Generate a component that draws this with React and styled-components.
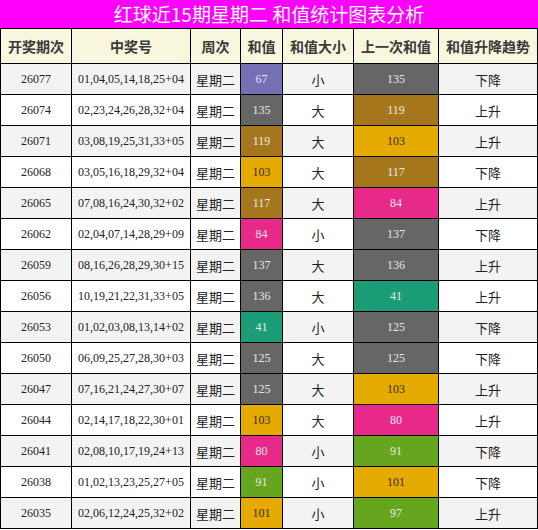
import React from "react";
import styled, { createGlobalStyle } from "styled-components";

const rows = [
	["26077", "01,04,05,14,18,25+04", 67, "小", 135, "下降"],
	["26074", "02,23,24,26,28,32+04", 135, "大", 119, "上升"],
	["26071", "03,08,19,25,31,33+05", 119, "大", 103, "上升"],
	["26068", "03,05,16,18,29,32+04", 103, "大", 117, "下降"],
	["26065", "07,08,16,24,30,32+02", 117, "大", 84, "上升"],
	["26062", "02,04,07,14,28,29+09", 84, "小", 137, "下降"],
	["26059", "08,16,26,28,29,30+15", 137, "大", 136, "上升"],
	["26056", "10,19,21,22,31,33+05", 136, "大", 41, "上升"],
	["26053", "01,02,03,08,13,14+02", 41, "小", 125, "下降"],
	["26050", "06,09,25,27,28,30+03", 125, "大", 125, "下降"],
	["26047", "07,16,21,24,27,30+07", 125, "大", 103, "上升"],
	["26044", "02,14,17,18,22,30+01", 103, "大", 80, "上升"],
	["26041", "02,08,10,17,19,24+13", 80, "小", 91, "下降"],
	["26038", "01,02,13,23,25,27+05", 91, "小", 101, "下降"],
	["26035", "02,06,12,24,25,32+02", 101, "小", 97, "上升"],
];

// colour of a sum cell, keyed by the value
const palette = {
	67: "#7570b3",
	135: "#666666",
	137: "#666666",
	136: "#666666",
	125: "#666666",
	119: "#a6761d",
	117: "#a6761d",
	103: "#e6ab02",
	101: "#e6ab02",
	84: "#e7298a",
	80: "#e7298a",
	41: "#1b9e77",
	91: "#66a61e",
	97: "#66a61e",
};

const headers = ["开奖期次", "中奖号", "周次", "和值", "和值大小", "上一次和值", "和值升降趋势"];
const widths = [71, 119, 50, 42, 71, 85, 99];

const GlobalStyle = createGlobalStyle`
	body {
		margin: 0;
		background: #ffffff;
		font-family: "Noto Sans CJK SC", "Noto Sans", sans-serif;
	}
`;

const Page = styled.div`
	width: 538px;
`;

const Title = styled.div`
	height: 28px;
	background: #ff00ff;
	color: #ffffff;
	font-family: "Noto Sans CJK SC", sans-serif;
	font-size: 19px;
	line-height: 28px;
	text-align: center;
	white-space: pre;
`;

const Table = styled.table`
	width: 538px;
	table-layout: fixed;
	border-collapse: collapse;
	border: 1px solid #000;
`;

const Th = styled.th`
	height: 34px;
	padding: 0;
	border: 1px solid #000;
	background: #f8f6dd;
	color: #3a3a3a;
	font-family: "Noto Sans CJK SC", sans-serif;
	font-size: 14px;
	font-weight: bold;
	text-align: center;
`;

const Tr = styled.tr`
	background: ${(p) => (p.$odd ? "#f3f3f3" : "#ffffff")};
`;

const Td = styled.td`
	height: 30px;
	padding: 0;
	border: 1px solid #000;
	text-align: center;
	color: #222;
	font-family: ${(p) =>
		p.$cjk ? `"Noto Sans CJK SC", sans-serif` : `"Liberation Serif", serif`};
	font-size: ${(p) => (p.$cjk ? "13px" : "12px")};
	white-space: nowrap;
`;

const SumCell = styled(Td)`
	background: ${(p) => p.$bg};
	color: ${(p) => (p.$bg === "#e6ab02" ? "#3a2a00" : "#e6e6e6")};
	font-size: 12px;
`;

export default function App() {
	return (
		<Page>
			<GlobalStyle />
			<Title>{"红球近15期星期二 和值统计图表分析"}</Title>
			<Table>
				<colgroup>
					{widths.map((w, i) => (
						<col key={i} style={{ width: w }} />
					))}
				</colgroup>
				<thead>
					<tr>
						{headers.map((h) => (
							<Th key={h}>{h}</Th>
						))}
					</tr>
				</thead>
				<tbody>
					{rows.map((r, i) => (
						<Tr key={r[0]} $odd={i % 2 === 0}>
							<Td>{r[0]}</Td>
							<Td>{r[1]}</Td>
							<Td $cjk>星期二</Td>
							<SumCell $bg={palette[r[2]]}>{r[2]}</SumCell>
							<Td $cjk>{r[3]}</Td>
							<SumCell $bg={palette[r[4]]}>{r[4]}</SumCell>
							<Td $cjk>{r[5]}</Td>
						</Tr>
					))}
				</tbody>
			</Table>
		</Page>
	);
}
